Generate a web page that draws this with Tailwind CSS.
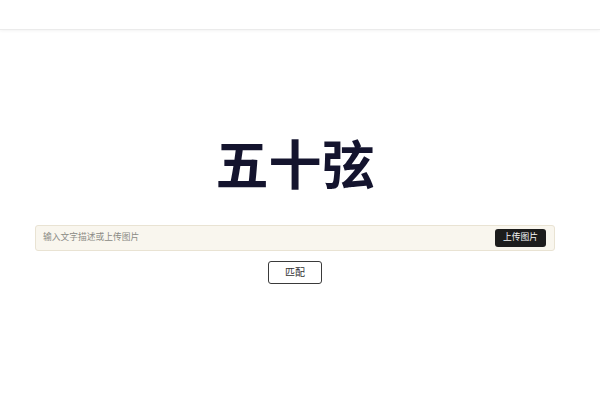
<!DOCTYPE html>
<html lang="zh-CN">
<head>
  <meta charset="UTF-8" />
  <meta name="viewport" content="width=device-width, initial-scale=1.0"/>
  <title>五十弦</title>
  <script src="https://cdn.jsdelivr.net/npm/@tailwindcss/browser@4"></script>
</head>
<body class="bg-white h-[400px] overflow-hidden font-['Liberation_Sans','Noto_Sans_CJK_SC',sans-serif]">
  <header class="h-[30px] bg-white border-b border-[#ebebeb] shadow-[0_1px_3px_rgba(0,0,0,0.05)]"></header>
  <main class="flex flex-col items-center pl-[35px] pr-[45px] pt-[103px]">
    <h1 class="h-[66px] flex items-center text-[53px] leading-none font-bold text-[#14142e]">五十弦</h1>
    <div class="mt-[26px] w-full h-[26px] flex items-center justify-between pl-[7px] pr-[8px] rounded-[3px] border border-[#e9e3d3] bg-[#f9f6ee]">
      <span class="text-[8.75px] text-[#8a8a84]">输入文字描述或上传图片</span>
      <button class="w-[51px] h-[18px] rounded-[3px] bg-[#1c1c1c] text-[8.75px] text-[#f5f5f5]">上传图片</button>
    </div>
    <button class="mt-[10px] w-[54px] h-[23px] rounded-[3px] border border-[#3a3a3a] bg-white text-[10px] text-[#333]">匹配</button>
  </main>
</body>
</html>
